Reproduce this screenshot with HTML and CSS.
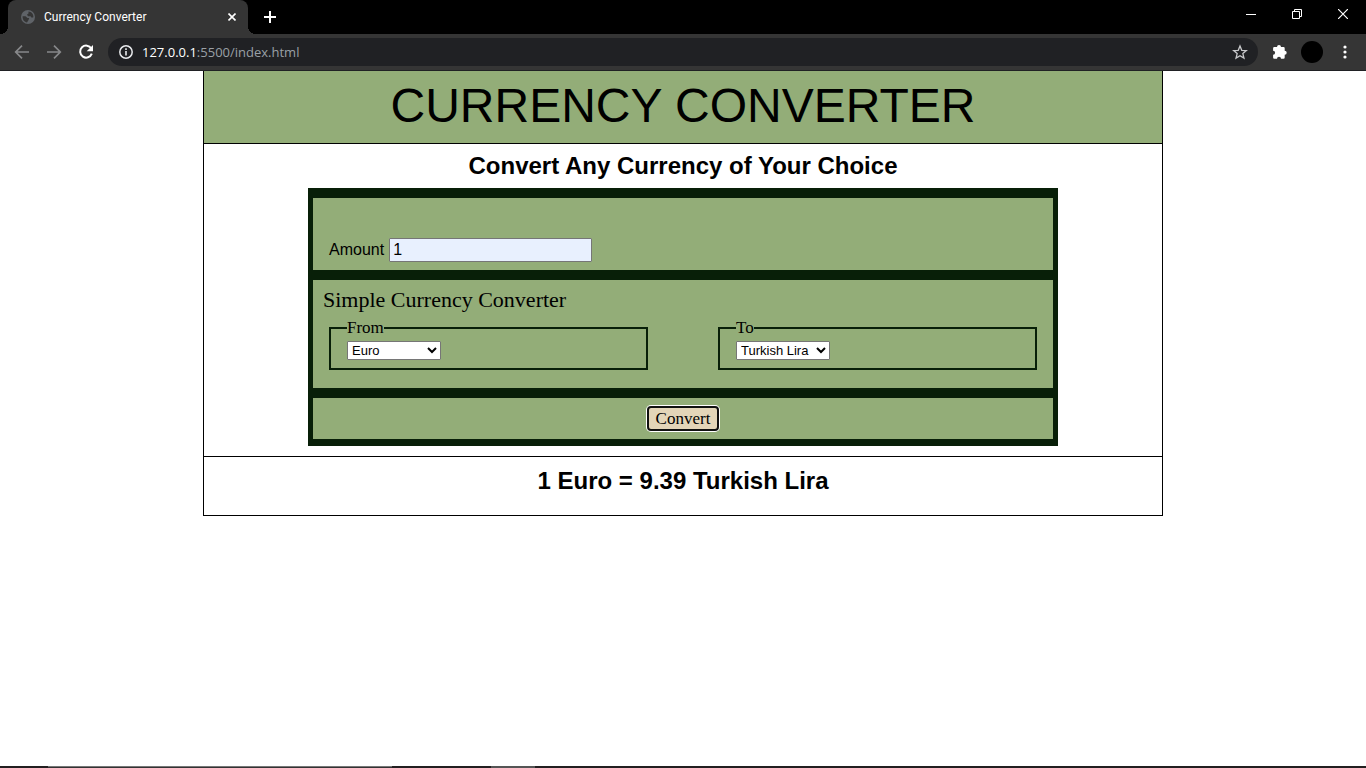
FILE: index.html
```html
<!DOCTYPE html>
<html lang="en">
<head>
<meta charset="utf-8">
<title>Currency Converter</title>
<link rel="stylesheet" href="styles.css">
</head>
<body>
<div class="browser">
  <div class="titlebar">
    <div class="tab">
      <svg width="14" height="14" viewBox="0 0 14 14" aria-hidden="true"><circle cx="7" cy="7" r="7" fill="#5f6368"/><path d="M1.600 6.200H4.500L6.500 8H8.200L7.500 10 6 12.400C3.500 12 1.500 10 1.600 6.200ZM7.500 1.600C10.500 1.800 12.500 4.200 12.400 7.200L10.800 7.800 9.500 6.200H7L6 4.500 7.500 3.500Z" fill="#353535"/></svg>
      <span class="tab-title">Currency Converter</span>
      <button class="icon-btn" type="button" aria-label="Close tab"><svg width="8" height="8" viewBox="0 0 8 8"><path d="M.5.5l7 7M7.500.5l-7 7" stroke="#fff" stroke-width="1.600"/></svg></button>
    </div>
    <button class="icon-btn new-tab" type="button" aria-label="New tab"><svg width="12" height="12" viewBox="0 0 12 12"><path d="M6 0v12M0 6h12" stroke="#fff" stroke-width="2"/></svg></button>
    <div class="window-controls">
      <button class="icon-btn" type="button" aria-label="Minimize"><svg width="10" height="10" viewBox="0 0 10 10"><path d="M0 5.500h10" stroke="#fff"/></svg></button>
      <button class="icon-btn" type="button" aria-label="Restore"><svg width="10" height="10" viewBox="0 0 10 10" fill="none" stroke="#fff"><path d="M.5 2.500h7v7h-7zM2.500 2.500v-2h7v7h-2"/></svg></button>
      <button class="icon-btn" type="button" aria-label="Close"><svg width="10" height="10" viewBox="0 0 10 10"><path d="M0 0l10 10M10 0L0 10" stroke="#fff" stroke-width="1.200"/></svg></button>
    </div>
  </div>
  <div class="toolbar">
    <button class="icon-btn" type="button" aria-label="Back"><svg width="16" height="16" viewBox="0 0 16 16" fill="none" stroke="#87888a" stroke-width="1.700"><path d="M15 8H2M8 1.700 1.700 8 8 14.300"/></svg></button>
    <button class="icon-btn" type="button" aria-label="Forward"><svg width="16" height="16" viewBox="0 0 16 16" fill="none" stroke="#87888a" stroke-width="1.700"><path d="M1 8h13M8 1.700 14.300 8 8 14.300"/></svg></button>
    <button class="icon-btn" type="button" aria-label="Reload"><svg width="16" height="16" viewBox="0 0 16 16"><path d="M13.300 4.500A6 6 0 1 0 13.800 9.700" fill="none" stroke="#fff" stroke-width="2"/><path d="M15 1v6.300H8.700Z" fill="#fff"/></svg></button>
    <div class="address">
      <svg width="14" height="14" viewBox="0 0 14 14" aria-hidden="true"><circle cx="7" cy="7" r="6.200" fill="none" stroke="#e8eaed" stroke-width="1.500"/><path d="M7 6v4.500M7 3.300v1.600" stroke="#e8eaed" stroke-width="1.600"/></svg>
      <span class="url"><span class="host">127.0.0.1</span>:5500/index.html</span>
      <button class="icon-btn" type="button" aria-label="Bookmark"><svg width="16" height="16" viewBox="0 0 16 16"><path d="M8 2l1.750 4.300 4.600.3-3.500 3 1.100 4.500L8 11.700l-3.950 2.400 1.100-4.500-3.500-3 4.600-.3Z" fill="none" stroke="#c8c9cb" stroke-width="1.300"/></svg></button>
    </div>
    <div class="actions">
      <button class="icon-btn" type="button" aria-label="Extensions"><svg width="16" height="16" viewBox="0 0 16 16"><path d="M2.300 3H5A2 2 0 0 1 9 3H11.500Q12.700 3 12.700 4.200V6.800A2 2 0 0 1 12.700 10.800V13.600Q12.700 14.800 11.500 14.800H9A2 2 0 0 0 5 14.800H2.300Q1.100 14.800 1.100 13.600V10.800A2 2 0 0 0 1.100 6.800V4.200Q1.100 3 2.300 3Z" fill="#fff"/></svg></button>
      <button class="icon-btn avatar" type="button" aria-label="Profile"></button>
      <button class="icon-btn" type="button" aria-label="Menu"><svg width="4" height="14" viewBox="0 0 4 14" fill="#fff"><circle cx="2" cy="2" r="1.600"/><circle cx="2" cy="7" r="1.600"/><circle cx="2" cy="12" r="1.600"/></svg></button>
    </div>
  </div>
</div>

<main class="page">
  <div class="container">
    <h1 class="title">CURRENCY CONVERTER</h1>
    <section class="converter">
      <h2 class="heading">Convert Any Currency of Your Choice</h2>
      <form class="panel">
        <div class="block amount">
          <label for="amount">Amount</label>
          <input id="amount" class="amount-input" type="text" value="1">
        </div>
        <div class="block currencies">
          <p class="caption">Simple Currency Converter</p>
          <div class="pair">
            <fieldset class="currency">
              <legend>From</legend>
              <select class="select" aria-label="From"><option>Euro</option><option>Turkish Lira</option></select>
            </fieldset>
            <fieldset class="currency">
              <legend>To</legend>
              <select class="select" aria-label="To"><option>Turkish Lira</option><option>Euro</option></select>
            </fieldset>
          </div>
        </div>
        <div class="block submit">
          <button class="convert" type="button">Convert</button>
        </div>
      </form>
    </section>
    <h2 class="result">1 Euro = 9.39 Turkish Lira</h2>
  </div>
</main>
<div class="taskbar"><div class="task-search"></div><div class="task-active"></div></div>
</body>
</html>
```
FILE: styles.css
```css
* { box-sizing: border-box; }

body {
  margin: 0;
  min-height: 100vh;
  display: flex;
  flex-direction: column;
  background: #fff;
  color: #000;
  font-family: Arial, "Liberation Sans", sans-serif;
  font-size: 16px;
}

h1, h2, p { margin: 0; }

/* Browser frame */
.browser {
  background: #000;
  font-family: "Segoe UI", "Open Sans", sans-serif;
}

.icon-btn {
  display: flex;
  align-items: center;
  justify-content: center;
  padding: 0;
  border: 0;
  background: none;
}

.titlebar {
  display: flex;
  height: 34px;
  padding-left: 8px;
}

.tab {
  position: relative;
  display: flex;
  align-items: center;
  gap: 9px;
  width: 240px;
  padding: 0 12px 0 13px;
  border-radius: 8px 8px 0 0;
  background: #353535;
}

.tab::before,
.tab::after {
  content: "";
  position: absolute;
  bottom: 0;
  width: 8px;
  height: 8px;
}

.tab::before {
  left: -8px;
  background: radial-gradient(circle at 0 0, #000 8px, #353535 8px);
}

.tab::after {
  right: -8px;
  background: radial-gradient(circle at 100% 0, #000 8px, #353535 8px);
}

.tab-title {
  flex: 1;
  color: #fff;
  font-family: "Segoe UI", Roboto, sans-serif;
  font-size: 12px;
}

.new-tab { margin-left: 16px; }

.window-controls {
  display: flex;
  height: 28px;
  margin-left: auto;
}

.window-controls .icon-btn { width: 46px; }

.toolbar {
  display: flex;
  align-items: center;
  gap: 16px;
  height: 37px;
  padding: 0 12px 0 14px;
  border-bottom: 1px solid #202124;
  background: #353535;
}

.address {
  flex: 1;
  display: flex;
  align-items: center;
  gap: 9px;
  height: 28px;
  margin-left: -2px;
  padding: 0 10px 0 11px;
  border-radius: 14px;
  background: #202124;
}

.url {
  flex: 1;
  color: #9aa0a6;
  font-size: 13px;
}

.host { color: #fff; }

.actions {
  display: flex;
  align-items: center;
  gap: 13px;
  margin-left: -2px;
}

.avatar {
  width: 22px;
  height: 22px;
  border-radius: 50%;
  background: #000;
}

.avatar + .icon-btn { width: 18px; }

/* Converter */
.page { flex: 1; }

.container {
  max-width: 960px;
  margin: 0 auto;
  border: 1px solid #000;
  border-top: 0;
}

.title {
  padding: 7px 0 9px;
  border-bottom: 1px solid #000;
  background: #93ad78;
  font-size: 48px;
  font-weight: 400;
  line-height: 56px;
  text-align: center;
}

.converter {
  padding: 8px 16px 10px;
  border-bottom: 1px solid #000;
}

.heading,
.result {
  font-size: 24px;
  line-height: 28px;
  text-align: center;
}

.result { padding: 10px 16px 20px; }

.panel {
  display: flex;
  flex-direction: column;
  gap: 10px;
  max-width: 750px;
  margin: 8px auto 0;
  padding: 10px 5px 7px;
  background: #081f08;
  font-family: Georgia, "Liberation Serif", serif;
}

.block { background: #93ad78; }

.amount {
  display: flex;
  align-items: center;
  gap: 5px;
  padding: 40px 16px 8px;
  font-family: Arial, "Liberation Sans", sans-serif;
}

.amount-input {
  width: 203px;
  height: 24px;
  padding: 1px 3px;
  border: 1px solid #767676;
  border-radius: 1px;
  background: #e8f0fe;
  color: #000;
  font: inherit;
}

.currencies { padding: 8px 16px 18px 10px; }

.caption {
  font-size: 22px;
  line-height: 24px;
}

.pair {
  display: flex;
  gap: 70px;
  padding-left: 6px;
}

.currency {
  flex: 1;
  min-width: 0;
  margin: 6px 0 0;
  padding: 3px 16px 8px;
  border: 2px solid #081f08;
}

.currency legend {
  padding: 0;
  font-size: 17px;
  line-height: 20px;
}

.select {
  display: block;
  width: 94px;
  height: 19px;
  border: 1px solid #767676;
  border-radius: 1px;
  background: #fff;
  color: #000;
  font-family: Arial, "Liberation Sans", sans-serif;
  font-size: 13px;
}

.submit {
  display: flex;
  justify-content: center;
  padding: 8px;
}

.convert {
  width: 72px;
  height: 25px;
  padding: 0;
  border: 2px solid #101010;
  border-radius: 4px;
  background: #e3d5b8;
  box-shadow: 0 0 0 1px #fff;
  color: #000;
  font-family: inherit;
  font-size: 17px;
  line-height: 20px;
}

/* Taskbar edge */
.taskbar {
  display: flex;
  height: 2px;
  padding-left: 48px;
  background: #231f20;
}

.task-search {
  width: 344px;
  border-top: 1px solid #777;
  background: #333;
}

.task-active {
  width: 44px;
  margin-left: 99px;
  background: #555;
}
```
